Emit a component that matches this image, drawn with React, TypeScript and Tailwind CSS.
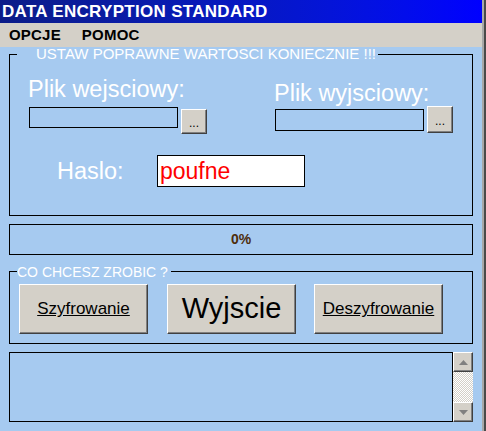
import React from "react";

const bevel =
  "border border-t-white border-l-white border-r-[#404040] border-b-[#404040] bg-[#d4d0c8] shadow-[inset_-1px_-1px_0_#808080]";

function Arrow({ up }: { up?: boolean }) {
  return (
    <svg width="9" height="5" viewBox="0 0 9 5">
      {up ? (
        <polygon points="0,5 9,5 4.5,0" fill="#808080" />
      ) : (
        <polygon points="0,0 9,0 4.5,5" fill="#808080" />
      )}
    </svg>
  );
}

export default function App() {
  return (
    <div className="flex h-[431px] w-[486px] font-['Liberation_Sans',Arial,sans-serif]">
      <div className="flex w-[482px] flex-col bg-[#a6caf0]">
        {/* title */}
        <div className="flex h-[23px] items-center bg-linear-to-r from-[#0c1c88] to-[#0000ff] pl-[2px] text-[17px] leading-[23px] font-bold tracking-[0.3px] text-white">
          DATA ENCRYPTION STANDARD
        </div>
        {/* menu */}
        <div className="flex h-[24px] items-center bg-[#d4d0c8] pl-[9px] text-[15px] font-bold tracking-[0.2px] text-black">
          <span>OPCJE</span>
          <span className="ml-[21px]">POMOC</span>
        </div>
        {/* main */}
        <div className="flex flex-1 flex-col px-[9px]">
          {/* group 1 */}
          <div className="relative mt-[7px] h-[162px] border border-black">
            <span className="absolute -top-[8px] left-[7px] bg-[#a6caf0] pr-[2px] pl-[19px] text-[15px] leading-[14px] text-white">
              USTAW POPRAWNE WARTOSCI KONIECZNIE !!!
            </span>
            <div className="flex pt-[21px] pl-[18px]">
              <div className="flex flex-col">
                <span className="text-[23.5px] leading-[26px] text-white">Plik wejsciowy:</span>
                <div className="mt-[5px] flex items-start pl-[1px]">
                  <div className="h-[21px] w-[149px] border border-black" />
                  <div className={`ml-[3px] mt-[2px] flex h-[25px] w-[26px] items-center justify-center pt-[2px] text-[12px] text-black ${bevel}`}>
                    ...
                  </div>
                </div>
              </div>
              <div className="mt-[4px] ml-[67px] flex flex-col">
                <span className="text-[23.5px] leading-[26px] text-white">Plik wyjsciowy:</span>
                <div className="flex items-start pl-[1px]">
                  <div className="mt-[3px] h-[22px] w-[149px] border border-black" />
                  <div className={`ml-[3px] flex h-[27px] w-[26px] items-center justify-center pt-[2px] text-[12px] text-black ${bevel}`}>
                    ...
                  </div>
                </div>
              </div>
            </div>
            <div className="mt-[21px] flex items-center pl-[47px]">
              <span className="w-[100px] text-[23.5px] leading-[26px] text-white">Haslo:</span>
              <div className="flex h-[32px] w-[148px] items-center border border-black bg-white pl-[2px] text-[23px] text-[#ff0000]">
                poufne
              </div>
            </div>
          </div>
          {/* progress */}
          <div className="mt-[8px] flex h-[31px] items-center justify-center border border-black text-[14px] font-bold text-[#4d2e0c]">
            0%
          </div>
          {/* group 2 */}
          <div className="relative mt-[16px] h-[73px] border border-black">
            <span className="absolute -top-[7px] left-[7px] bg-[#a6caf0] pr-[3px] text-[14px] leading-[14px] text-white">
              CO CHCESZ ZROBIC ?
            </span>
            <div className="flex pt-[12px] pl-[9px]">
              <div className={`flex h-[50px] w-[129px] items-center justify-center text-[17px] text-black underline ${bevel}`}>
                Szyfrowanie
              </div>
              <div className={`ml-[19px] flex h-[50px] w-[129px] items-center justify-center text-[29px] text-black ${bevel}`}>
                Wyjscie
              </div>
              <div className={`ml-[18px] flex h-[50px] w-[129px] items-center justify-center text-[17px] text-black underline ${bevel}`}>
                Deszyfrowanie
              </div>
            </div>
          </div>
          {/* text area */}
          <div className="mt-[8px] flex h-[70px]">
            <div className="w-[444px] border border-black" />
            <div className="flex w-[20px] flex-col">
              <div className={`flex h-[20px] items-center justify-center ${bevel}`}>
                <Arrow up />
              </div>
              <div className="flex-1 bg-[repeating-conic-gradient(#ffffff_0_25%,#d4d0c8_0_50%)] bg-[length:2px_2px]" />
              <div className={`flex h-[20px] items-center justify-center ${bevel}`}>
                <Arrow />
              </div>
            </div>
          </div>
        </div>
      </div>
      <div className="w-[2px] bg-[#a8a8a8]" />
      <div className="w-[2px] bg-[#4a4a4a]" />
    </div>
  );
}
